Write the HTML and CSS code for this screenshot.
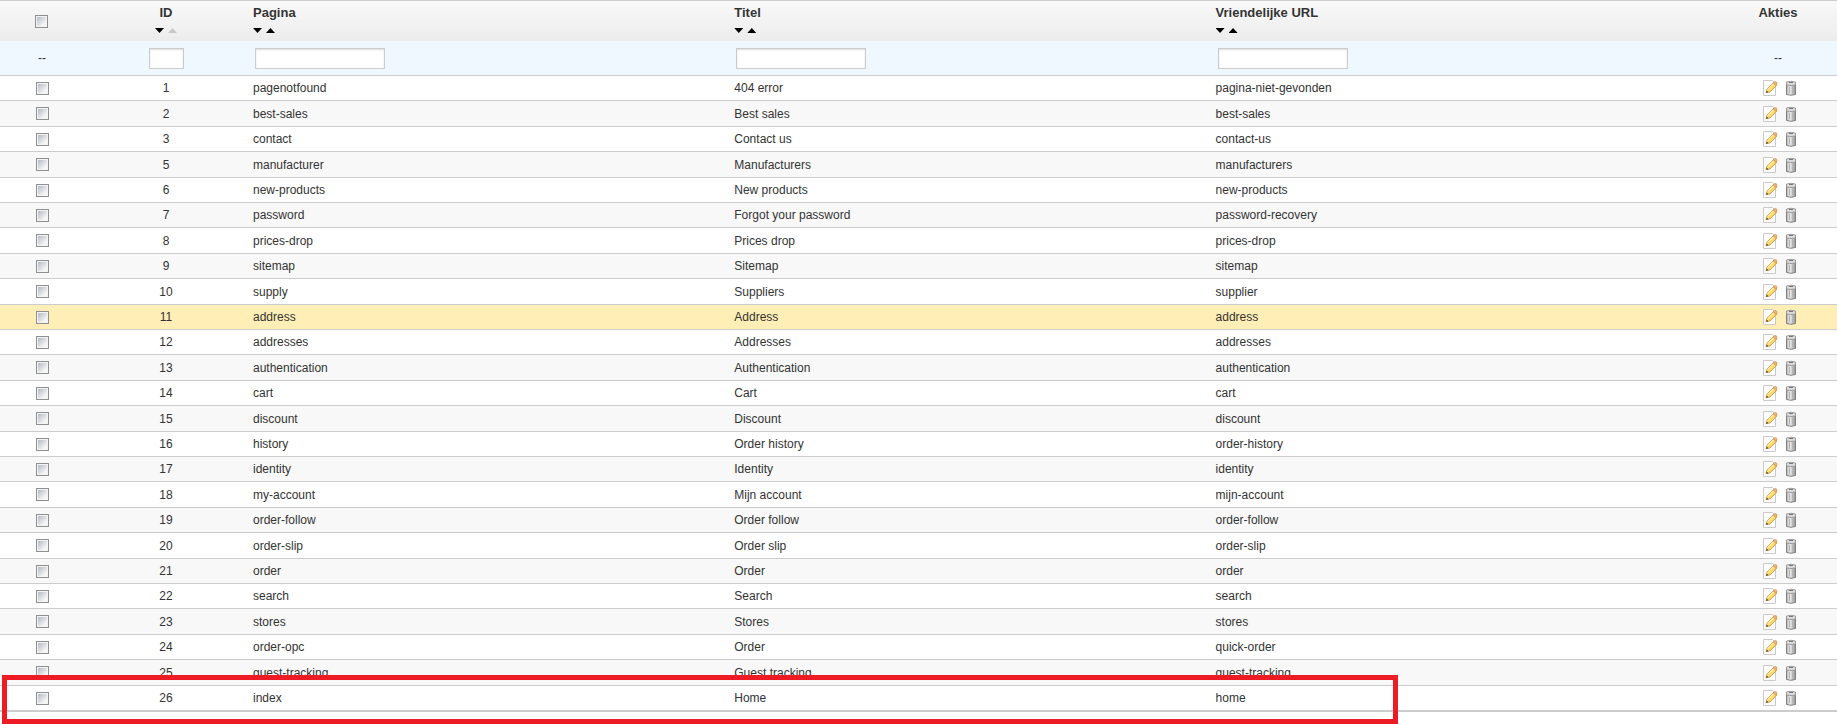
FILE: index.html
```html
<!DOCTYPE html>
<html lang="nl">
<head>
    <meta charset="UTF-8">
    <meta name="viewport" content="width=device-width, initial-scale=1.0">
    <title>SEO &amp; URL's</title>
    <link rel="stylesheet" href="styles.css">
</head>
<body>

    <svg class="sprite" aria-hidden="true">
        <linearGradient id="pencil-fill" x1="0" y1="0" x2="1" y2="1">
            <stop offset="0.4" stop-color="#fff2a0"/>
            <stop offset="0.65" stop-color="#f8c955"/>
        </linearGradient>
        <linearGradient id="bin-fill">
            <stop offset="0" stop-color="#a8a8a8"/>
            <stop offset="0.35" stop-color="#f4f4f4"/>
            <stop offset="1" stop-color="#909090"/>
        </linearGradient>
        <symbol id="icon-edit" viewBox="0 0 16 16">
            <path d="M1.500 .5h9l3 3v12h-12z" fill="#fdfdfd" stroke="#cacaca"/>
            <path d="M4 12.500l1-3.500 7-7 3 3-7 7z" fill="url(#pencil-fill)" stroke="#d09a3c" stroke-width=".8"/>
            <path d="M11 3l1.500-1.500q1.500-.5 2.500 1v1.500l-1 1.500z" fill="#e6b07c" stroke="#c98850" stroke-width=".5"/>
            <path d="M4 13l.8-2.500 1.700 1.700z" fill="#5a4a32"/>
        </symbol>
        <symbol id="icon-delete" viewBox="0 0 16 16">
            <path d="M3.500 4.500h9v10q-4.500 1.500-9 0z" fill="url(#bin-fill)" stroke="#808080"/>
            <path d="M6.500 6.500v7M9.500 6.500v7" stroke="#b4b4b4" fill="none"/>
            <path d="M3.500 2q4.500-1.500 9 0v3q-4.500 1-9 0z" fill="#dcdcdc" stroke="#8a8a8a" stroke-width=".8"/>
            <path d="M6 2.500h4" stroke="#777"/>
        </symbol>
    </svg>

    <div class="list">
        <table class="table">
            <colgroup>
                <col class="col-check">
                <col class="col-id">
                <col class="col-text">
                <col class="col-text">
                <col>
                <col class="col-actions">
            </colgroup>
            <thead>
                <tr class="heading">
                    <th class="center check-all"><input type="checkbox" aria-label="Alles selecteren"></th>
                    <th class="center">
                        <span class="title">ID</span>
                        <span class="sort"><a class="down" href="#" aria-label="ID aflopend"></a><a class="up active" href="#" aria-label="ID oplopend"></a></span>
                    </th>
                    <th>
                        <span class="title">Pagina</span>
                        <span class="sort"><a class="down" href="#" aria-label="Pagina aflopend"></a><a class="up" href="#" aria-label="Pagina oplopend"></a></span>
                    </th>
                    <th>
                        <span class="title">Titel</span>
                        <span class="sort"><a class="down" href="#" aria-label="Titel aflopend"></a><a class="up" href="#" aria-label="Titel oplopend"></a></span>
                    </th>
                    <th>
                        <span class="title">Vriendelijke URL</span>
                        <span class="sort"><a class="down" href="#" aria-label="URL aflopend"></a><a class="up" href="#" aria-label="URL oplopend"></a></span>
                    </th>
                    <th class="center"><span class="title">Akties</span></th>
                </tr>
                <tr class="filter">
                    <td class="center">--</td>
                    <td class="center"><input type="text" class="short" aria-label="Filter ID"></td>
                    <td><input type="text" aria-label="Filter pagina"></td>
                    <td><input type="text" aria-label="Filter titel"></td>
                    <td><input type="text" aria-label="Filter vriendelijke URL"></td>
                    <td class="center">--</td>
                </tr>
            </thead>
            <tbody id="rows"></tbody>
        </table>
        <div class="marker"></div>
    </div>

    <script>
        const pages = [
            [1, 'pagenotfound', '404 error', 'pagina-niet-gevonden'],
            [2, 'best-sales', 'Best sales', 'best-sales'],
            [3, 'contact', 'Contact us', 'contact-us'],
            [5, 'manufacturer', 'Manufacturers', 'manufacturers'],
            [6, 'new-products', 'New products', 'new-products'],
            [7, 'password', 'Forgot your password', 'password-recovery'],
            [8, 'prices-drop', 'Prices drop', 'prices-drop'],
            [9, 'sitemap', 'Sitemap', 'sitemap'],
            [10, 'supply', 'Suppliers', 'supplier'],
            [11, 'address', 'Address', 'address'],
            [12, 'addresses', 'Addresses', 'addresses'],
            [13, 'authentication', 'Authentication', 'authentication'],
            [14, 'cart', 'Cart', 'cart'],
            [15, 'discount', 'Discount', 'discount'],
            [16, 'history', 'Order history', 'order-history'],
            [17, 'identity', 'Identity', 'identity'],
            [18, 'my-account', 'Mijn account', 'mijn-account'],
            [19, 'order-follow', 'Order follow', 'order-follow'],
            [20, 'order-slip', 'Order slip', 'order-slip'],
            [21, 'order', 'Order', 'order'],
            [22, 'search', 'Search', 'search'],
            [23, 'stores', 'Stores', 'stores'],
            [24, 'order-opc', 'Order', 'quick-order'],
            [25, 'guest-tracking', 'Guest tracking', 'guest-tracking'],
            [26, 'index', 'Home', 'home']
        ];
        const hovered = 11;

        document.getElementById('rows').innerHTML = pages.map(([id, page, title, url]) => `
            <tr${id === hovered ? ' class="hover"' : ''}>
                <td class="center"><input type="checkbox" aria-label="Selecteer ${page}"></td>
                <td class="center">${id}</td>
                <td>${page}</td>
                <td>${title}</td>
                <td>${url}</td>
                <td><div class="actions">
                    <a href="#" aria-label="Wijzig ${page}"><svg><use href="#icon-edit"/></svg></a>
                    <a href="#" aria-label="Verwijder ${page}"><svg><use href="#icon-delete"/></svg></a>
                </div></td>
            </tr>`).join('');
    </script>

</body>
</html>
```
FILE: styles.css
```css
body {
    margin: 0;
    background: #fff;
    color: #333;
    font-family: Arial, "Liberation Sans", sans-serif;
    font-size: 12px;
}
.sprite {
    position: absolute;
    width: 0;
    height: 0;
}
.list {
    position: relative;
    padding-bottom: 12px;
}
.table {
    width: 100%;
    table-layout: fixed;
    border-collapse: separate;
    border-spacing: 0;
    border-top: 1px solid #ccc;
    border-bottom: 1px solid #ccc;
}
.col-check {
    width: 84px;
}
.col-id {
    width: 164px;
}
.col-text {
    width: 26.2%;
}
.col-actions {
    width: 118px;
}
th, td {
    box-sizing: border-box;
    padding: 0 5px;
    text-align: left;
    line-height: 14px;
}
.center {
    text-align: center;
}
.heading {
    height: 40px;
    background: linear-gradient(#f9f9f9, #ececec);
}
.heading th {
    padding-top: 4px;
    vertical-align: top;
    font-size: 13px;
    text-shadow: 0 1px 0 #fff;
}
.heading .check-all {
    padding: 0 6px 0 4px;
    vertical-align: middle;
}
.title {
    display: block;
    line-height: 16px;
}
.sort {
    display: flex;
    gap: 4px;
    padding-top: 7px;
}
.center .sort {
    justify-content: center;
}
.sort a {
    width: 9px;
    height: 5px;
    background: #000;
}
.sort .down {
    clip-path: polygon(0 0, 100% 0, 50% 100%);
}
.sort .up {
    clip-path: polygon(50% 0, 100% 100%, 0 100%);
}
.sort .active {
    background: #c8c8c8;
}
.filter {
    height: 35px;
    background: #f0f8ff;
}
.filter td, tbody td {
    border-bottom: 1px solid #ccc;
}
input[type="text"] {
    display: block;
    box-sizing: border-box;
    width: 130px;
    height: 21px;
    margin: 0 2px;
    padding: 0 4px;
    border: 1px solid #ccc;
    background: #fff;
    box-shadow: inset 0 1px 2px #ddd;
    font: inherit;
}
input.short {
    width: 35px;
    margin: 0 auto;
}
input[type="checkbox"] {
    appearance: none;
    display: block;
    box-sizing: border-box;
    width: 13px;
    height: 13px;
    margin: 0 auto;
    border: 1px solid #8e8f8f;
    background: linear-gradient(135deg, #b4b9c2, #f6f6f6 80%) content-box, #f4f4f4;
    padding: 1px;
}
input[type="checkbox"]:checked {
    background: #3c6eb4 content-box;
}
tbody tr {
    height: 25px;
}
/* 127px for every five rows */
tbody tr:nth-child(5n+2), tbody tr:nth-child(5n+4) {
    height: 26px;
}
tbody tr:nth-child(even) {
    background: #f8f8f8;
}
tbody tr.hover, tbody tr:hover {
    background: #ffeeb5;
}
.actions {
    display: flex;
    gap: 5px;
    padding-left: 38px;
}
.actions a, .actions svg {
    display: block;
    width: 16px;
    height: 16px;
}
.marker {
    position: absolute;
    left: 2px;
    bottom: 0;
    box-sizing: border-box;
    width: 76%;
    height: 49px;
    border: 5px solid #ed1c24;
    pointer-events: none;
}
```
